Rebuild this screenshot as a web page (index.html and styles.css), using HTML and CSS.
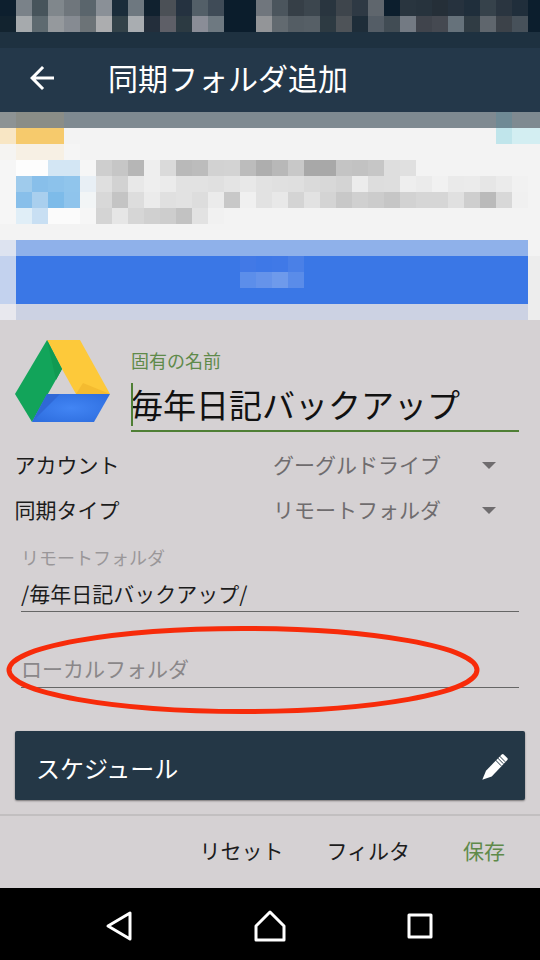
FILE: index.html
```html
<!DOCTYPE html>
<html lang="ja">
<head>
    <title>同期フォルダ追加</title>
    <meta name="viewport" content="width=device-width, initial-scale=1">
    <link rel="stylesheet" href="styles.css">
</head>
<body>

<!-- Blurred status bar -->
<svg class="mosaic mosaic-top" viewBox="0 0 544 32" aria-hidden="true">
    <g>
        <rect x="0" fill="#0d1f2e"/><rect x="16" fill="#7a8289"/><rect x="32" fill="#47545b"/><rect x="48" fill="#80878c"/><rect x="64" fill="#6f767c"/><rect x="80" fill="#5a656c"/><rect x="96" fill="#8a9097"/><rect x="112" fill="#1a2c3a"/><rect x="128" fill="#6e7880"/><rect x="144" fill="#10212f"/><rect x="160" fill="#4b5056"/><rect x="176" fill="#253240"/><rect x="192" fill="#535f68"/><rect x="208" fill="#3f4b57"/><rect x="224" fill="#0b1d2c"/><rect x="240" fill="#0b1d2c"/><rect x="256" fill="#70767d"/><rect x="272" fill="#4b555d"/><rect x="288" fill="#363f47"/><rect x="304" fill="#3c464e"/><rect x="320" fill="#29353f"/><rect x="336" fill="#3e454c"/><rect x="352" fill="#2e3944"/><rect x="368" fill="#5f666d"/><rect x="384" fill="#0c1e2d"/><rect x="400" fill="#29353f"/><rect x="416" fill="#27333d"/><rect x="432" fill="#252f38"/><rect x="448" fill="#26323e"/><rect x="464" fill="#1f2e3b"/><rect x="480" fill="#36424b"/><rect x="496" fill="#2a3540"/><rect x="512" fill="#202e3b"/><rect x="528" fill="#0c1e2d"/>
    </g>
    <g transform="translate(0 16)">
        <rect x="0" fill="#12232f"/><rect x="16" fill="#a6aaad"/><rect x="32" fill="#5e6a70"/><rect x="48" fill="#95999d"/><rect x="64" fill="#868b92"/><rect x="80" fill="#6c7377"/><rect x="96" fill="#acadaf"/><rect x="112" fill="#334249"/><rect x="128" fill="#a9adb1"/><rect x="144" fill="#232e3b"/><rect x="160" fill="#5e5f67"/><rect x="176" fill="#2c3a42"/><rect x="192" fill="#8a8d97"/><rect x="208" fill="#6e7981"/><rect x="224" fill="#0b1d2c"/><rect x="240" fill="#0b1d2c"/><rect x="256" fill="#939598"/><rect x="272" fill="#626a70"/><rect x="288" fill="#545d64"/><rect x="304" fill="#565f66"/><rect x="320" fill="#2d3a42"/><rect x="336" fill="#4e5358"/><rect x="352" fill="#1e2d39"/><rect x="368" fill="#545d66"/><rect x="384" fill="#414c54"/><rect x="400" fill="#737a83"/><rect x="416" fill="#40444c"/><rect x="432" fill="#454951"/><rect x="448" fill="#66727b"/><rect x="464" fill="#303c44"/><rect x="480" fill="#5f666d"/><rect x="496" fill="#3c4249"/><rect x="512" fill="#47515a"/><rect x="528" fill="#0c1e2d"/>
    </g>
</svg>

<!-- Toolbar -->
<div class="toolbar-band"></div>
<header class="toolbar">
    <svg class="back-arrow" viewBox="0 0 24 24"><path d="M20 11H7.83l5.59-5.59L12 4l-8 8 8 8 1.41-1.41L7.83 13H20v-2z"/></svg>
    <h1>同期フォルダ追加</h1>
</header>

<!-- Blurred page behind the dialog -->
<svg class="mosaic mosaic-page" viewBox="0 0 544 208" aria-hidden="true">
    <path class="sheet" d="M0 16h544v192H0z"/>
    <path fill="#7f8a91" d="M0 0h544v16H0z"/>
    <path fill="#8d9394" d="M0 0h16v16H0z"/>
    <path fill="#8a8d87" d="M16 0h48v16H16z"/>
    <path fill="#6f8a95" d="M496 0h16v16h-16z"/>
    <g transform="translate(0 16)">
        <rect x="0" fill="#f8e6c4"/><rect x="16" fill="#f6ca6c"/><rect x="32" fill="#f6ca6c"/><rect x="48" fill="#f6ca6c"/><rect x="496" fill="#c0e5eb"/><rect x="512" fill="#d3eef2"/><rect x="528" fill="#d3eef2"/>
    </g>
    <g transform="translate(0 32)">
        <rect x="0" fill="#f5f4f2"/><rect x="16" fill="#f7f0e4"/><rect x="32" fill="#f7f0e4"/><rect x="48" fill="#f7f0e4"/><rect x="64" fill="#f5f5f5"/>
    </g>
    <g transform="translate(0 48)">
        <rect x="0" fill="#f6f6f6"/><rect x="16" fill="#fdfdfd"/><rect x="32" fill="#fdfdfd"/><rect x="48" fill="#d3e6f4"/><rect x="64" fill="#d3e6f4"/><rect x="80" fill="#f6f6f6"/><rect x="96" fill="#cecece"/><rect x="112" fill="#c6c6c6"/><rect x="128" fill="#b6b6b6"/><rect x="144" fill="#eeeeee"/><rect x="160" fill="#dadada"/><rect x="176" fill="#b9b9b9"/><rect x="192" fill="#bcbcbc"/><rect x="208" fill="#d2d2d2"/><rect x="224" fill="#d3d3d3"/><rect x="240" fill="#bcbcbc"/><rect x="256" fill="#aeaeae"/><rect x="272" fill="#b8b8b8"/><rect x="288" fill="#c8c8c8"/><rect x="304" fill="#a8a8a8"/><rect x="320" fill="#a8a8a8"/><rect x="336" fill="#c4c4c4"/><rect x="352" fill="#c2c2c2"/><rect x="368" fill="#c6c6c6"/><rect x="384" fill="#dedede"/><rect x="400" fill="#e0e0e0"/>
    </g>
    <g transform="translate(0 64)">
        <rect x="0" fill="#f6f6f6"/><rect x="16" fill="#9fcbec"/><rect x="32" fill="#88bfea"/><rect x="48" fill="#8cc2eb"/><rect x="64" fill="#90c5ec"/><rect x="80" fill="#e8eff5"/><rect x="96" fill="#dfdfdf"/><rect x="112" fill="#d2d2d2"/><rect x="128" fill="#e8e8e8"/><rect x="144" fill="#eeeeee"/><rect x="160" fill="#ebebeb"/><rect x="176" fill="#e2e2e2"/><rect x="192" fill="#e2e2e2"/><rect x="208" fill="#e0e0e0"/><rect x="224" fill="#e4e4e4"/><rect x="240" fill="#e8e8e8"/><rect x="256" fill="#e2e2e2"/><rect x="272" fill="#e0e0e0"/><rect x="288" fill="#dfdfdf"/><rect x="304" fill="#dadada"/><rect x="320" fill="#d8d8d8"/><rect x="336" fill="#d4d4d4"/><rect x="352" fill="#ececec"/><rect x="368" fill="#dddddd"/><rect x="384" fill="#dedede"/><rect x="400" fill="#eeeeee"/><rect x="416" fill="#ebebeb"/><rect x="432" fill="#f1f1f1"/><rect x="448" fill="#eaeaea"/><rect x="464" fill="#ebebeb"/><rect x="480" fill="#e6e6e6"/><rect x="496" fill="#ebebeb"/><rect x="512" fill="#f1f1f1"/>
    </g>
    <g transform="translate(0 80)">
        <rect x="0" fill="#f6f6f6"/><rect x="16" fill="#88bfea"/><rect x="32" fill="#a9cfee"/><rect x="48" fill="#7dbbe9"/><rect x="64" fill="#8fc4ec"/><rect x="80" fill="#f2f5f6"/><rect x="96" fill="#d8d8d8"/><rect x="112" fill="#c4c4c4"/><rect x="128" fill="#dddddd"/><rect x="144" fill="#ebebeb"/><rect x="160" fill="#e0e0e0"/><rect x="176" fill="#e2e2e2"/><rect x="192" fill="#dddddd"/><rect x="208" fill="#ebebeb"/><rect x="224" fill="#c8c8c8"/><rect x="240" fill="#f0f0f0"/><rect x="256" fill="#e2e2e2"/><rect x="272" fill="#e8e8e8"/><rect x="288" fill="#d4d4d4"/><rect x="304" fill="#e2e2e2"/><rect x="320" fill="#d4d4d4"/><rect x="336" fill="#c8c8c8"/><rect x="352" fill="#d0d0d0"/><rect x="368" fill="#cccccc"/><rect x="384" fill="#c6c6c6"/><rect x="400" fill="#d2d2d2"/><rect x="416" fill="#d6d6d6"/><rect x="432" fill="#d6d6d6"/><rect x="448" fill="#e0e0e0"/><rect x="464" fill="#cecece"/><rect x="480" fill="#bababa"/><rect x="496" fill="#d8d8d8"/><rect x="512" fill="#f0f0f0"/>
    </g>
    <g transform="translate(0 96)">
        <rect x="0" fill="#f6f6f6"/><rect x="16" fill="#e0eef7"/><rect x="32" fill="#c8dff3"/><rect x="48" fill="#fbfbfb"/><rect x="64" fill="#fbfbfb"/><rect x="80" fill="#f6f6f6"/><rect x="96" fill="#d4d4d4"/><rect x="112" fill="#e6e6e6"/><rect x="128" fill="#d6d6d6"/><rect x="144" fill="#d0d0d0"/><rect x="160" fill="#cdcdcd"/><rect x="176" fill="#c2c2c2"/><rect x="192" fill="#e2e2e2"/><rect x="208" fill="#f1f1f1"/>
    </g>
    <path fill="#dde3f0" d="M0 128h16v16H0z"/>
    <path fill="#8fb1ea" d="M16 128h512v16H16z"/>
    <path fill="#c3d2ee" d="M0 144h16v48H0z"/>
    <path fill="#3a77e6" d="M16 144h512v48H16z"/>
    <path fill="#ededed" d="M528 144h16v64h-16z"/>
    <g transform="translate(0 144)">
        <rect x="240" fill="#4279e6"/><rect x="256" fill="#3e78e7"/><rect x="272" fill="#4079e7"/><rect x="288" fill="#4a80e7"/>
    </g>
    <g transform="translate(0 160)">
        <rect x="240" fill="#5c8eea"/><rect x="256" fill="#6593ea"/><rect x="272" fill="#6e9aeb"/><rect x="288" fill="#5a8ce9"/>
    </g>
    <path fill="#e8e8ee" d="M0 192h16v16H0z"/>
    <path fill="#ccd2e3" d="M16 192h512v16H16z"/>
</svg>

<!-- Dialog -->
<main class="panel">
    <div class="name-row">
        <svg class="drive-logo" viewBox="0 0 95 83">
            <defs>
                <radialGradient id="driveBlue" cx="50%" cy="50%" r="60%">
                    <stop offset="0" stop-color="#4285f4"/>
                    <stop offset="1" stop-color="#2f6fe0"/>
                </radialGradient>
            </defs>
            <path fill="#fdc93a" d="M32 0h33l30 54H61L47 29z"/>
            <path fill="#f4bb30" d="M61 54h34L68 43z"/>
            <path fill="#12a45a" d="M32 0L0 54l17 28 30-53z"/>
            <path fill="#109a52" d="M32 0l15 29-6 11z"/>
            <path fill="url(#driveBlue)" d="M32 54h63L79 82H17z"/>
            <path fill="#2f68d6" d="M32 54h13L17 82z"/>
        </svg>
        <div class="name-col">
            <label class="name-label">固有の名前</label>
            <div class="name-input"><span class="caret"></span>毎年日記バックアップ</div>
        </div>
    </div>

    <div class="select-row">
        <span class="select-label">アカウント</span>
        <span class="select-value">グーグルドライブ</span>
        <span class="select-arrow"></span>
    </div>
    <div class="select-row">
        <span class="select-label">同期タイプ</span>
        <span class="select-value">リモートフォルダ</span>
        <span class="select-arrow"></span>
    </div>

    <div class="field">
        <div class="field-label">リモートフォルダ</div>
        <div class="field-input">/毎年日記バックアップ/</div>
    </div>
    <div class="field field-local">
        <div class="field-input placeholder">ローカルフォルダ</div>
    </div>

    <section class="card">
        <span>スケジュール</span>
        <svg class="pencil" viewBox="0 0 26 28">
            <path fill="#fff" d="M0.300 25.700L4 16.700 19.700 0.500a1.500 1.500 0 0 1 2 0l3.600 3.600a1.500 1.500 0 0 1 0 2L9.700 22.400z"/>
            <path fill="none" stroke="#243746" d="M17.600 2.100l5.600 5.700M15.700 4l5.600 5.700M13.600 6.100l5.600 5.700"/>
        </svg>
    </section>

    <footer class="actions">
        <button>リセット</button>
        <button>フィルタ</button>
        <button class="save">保存</button>
    </footer>

    <!-- red marker drawn over the screenshot -->
    <svg class="marker" viewBox="0 0 480 96">
        <ellipse cx="243" cy="48" rx="234" ry="41.500"/>
    </svg>
</main>

<!-- Android navigation -->
<nav class="navbar">
    <svg viewBox="0 0 32 32"><path d="M26 3v26L4 16z"/></svg>
    <svg viewBox="0 0 32 32"><path d="M16 2L30 16v14H2V16z"/></svg>
    <svg viewBox="0 0 32 32"><path d="M5 5h22v22H5z"/></svg>
</nav>

</body>
</html>
```

FILE: styles.css
```css
/* Base */
body {
    margin: 0;
    width: 540px;
    height: 960px;
    overflow: hidden;
    display: flex;
    flex-direction: column;
    font-family: "Noto Sans CJK JP", "Noto Sans", sans-serif;
}

/* Blurred areas */
.mosaic {
    display: block;
    flex: none;
    width: 544px;
}

.mosaic rect {
    width: 16px;
    height: 16px;
}

.mosaic-top {
    height: 32px;
}

.mosaic-page {
    height: 208px;
}

.mosaic .sheet {
    fill: #f3f3f3;
}

/* Toolbar */
.toolbar-band {
    flex: none;
    height: 16px;
    background-color: #1e3140;
}

.toolbar {
    flex: none;
    height: 64px;
    display: flex;
    align-items: center;
    padding-left: 24px;
    background-color: #24384a;
}

.back-arrow {
    width: 36px;
    height: 36px;
    margin-bottom: 4px;
    fill: #fff;
}

.toolbar h1 {
    margin: 0 0 6px 48px;
    font-size: 30px;
    font-weight: 400;
    line-height: 40px;
    color: #fff;
}

/* Dialog panel */
.panel {
    position: relative;
    flex: 1;
    display: flex;
    flex-direction: column;
    padding: 20px 21px 0 15px;
    background-color: #d5d1d3;
}

.name-row {
    display: flex;
    align-items: flex-start;
    gap: 21px;
}

.drive-logo {
    flex: none;
    width: 95px;
    height: 83px;
}

.name-col {
    flex: 1;
    padding-top: 9px;
}

.name-label {
    display: block;
    font-size: 18px;
    line-height: 22px;
    color: #5f8a4a;
}

.name-input {
    position: relative;
    margin-top: 12px;
    height: 47px;
    font-size: 33px;
    line-height: 43px;
    text-indent: -1px;
    color: #111;
    border-bottom: 2px solid #4f7f35;
}

.caret {
    position: absolute;
    left: 0;
    top: 0;
    width: 2px;
    height: 43px;
    background-color: #4f7f35;
}

/* Spinners */
.select-row {
    display: flex;
    align-items: center;
    height: 45px;
    margin-left: -0.500px;
    font-size: 21px;
}

.name-row + .select-row {
    margin-top: 11px;
}

.select-label {
    width: 258.500px;
    padding-bottom: 4px;
    color: #1c1c1c;
}

.select-value {
    width: 209px;
    padding-bottom: 4px;
    color: #6f6c6e;
}

.select-arrow {
    width: 0;
    height: 0;
    border-top: 7px solid #6f6c6e;
    border-left: 7.500px solid transparent;
    border-right: 7.500px solid transparent;
}

/* Text fields */
.field {
    margin-left: 6px;
    margin-top: 12px;
}

.field-label {
    font-size: 18px;
    line-height: 24px;
    color: #9a9799;
}

.field-input {
    margin-top: 8px;
    height: 34px;
    font-size: 21px;
    line-height: 32px;
    color: #1c1c1c;
    border-bottom: 1.500px solid #666;
}

.field-local {
    margin-top: 32px;
}

.placeholder {
    height: 35px;
    color: #8a8789;
}

/* Schedule card */
.card {
    display: flex;
    align-items: center;
    justify-content: space-between;
    height: 65px;
    margin: 43px -6px 0 0;
    padding: 4px 17px 0 21px;
    border-radius: 2px;
    font-size: 24px;
    color: #fff;
    background-color: #243746;
    box-shadow: 0 1px 2px rgba(0, 0, 0, 0.45);
}

.pencil {
    width: 26px;
    height: 28px;
}

/* Bottom buttons */
.actions {
    display: flex;
    justify-content: flex-end;
    align-items: center;
    gap: 43px;
    flex: 1;
    margin: 14px -21px 0 -15px;
    padding: 0 35px 5px 0;
    border-top: 2px solid #c2bfc0;
}

.actions button {
    padding: 0;
    border: 0;
    background: none;
    font: inherit;
    font-size: 21px;
    color: #1c1c1c;
}

.actions .save {
    margin-left: 10px;
    color: #5f8a4a;
}

/* Annotation ring */
.marker {
    position: absolute;
    left: 0;
    top: 302px;
    width: 480px;
    height: 96px;
    fill: none;
    stroke: #f72b0a;
    stroke-width: 5;
}

/* Navigation bar */
.navbar {
    flex: none;
    height: 72px;
    box-sizing: border-box;
    display: flex;
    justify-content: center;
    gap: 118px;
    padding-top: 22px;
    background-color: #000;
}

.navbar svg {
    width: 32px;
    height: 32px;
    fill: none;
    stroke: #fff;
    stroke-width: 3;
    stroke-linejoin: round;
}
```
